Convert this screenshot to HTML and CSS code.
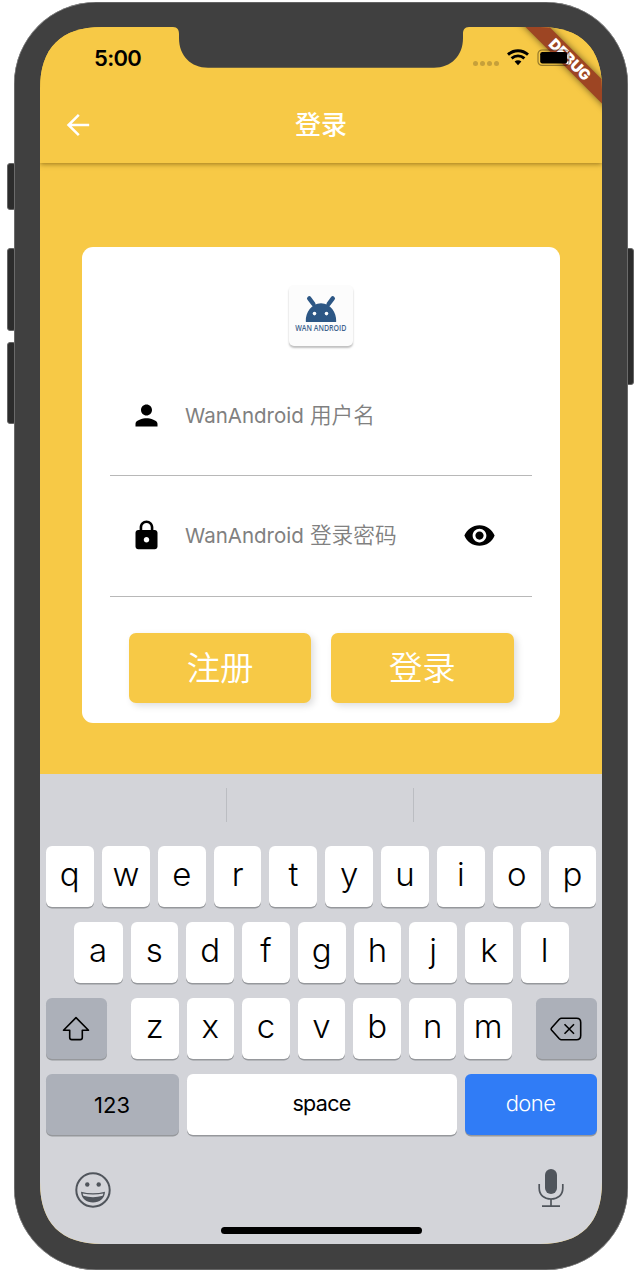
FILE: index.html
```
<!DOCTYPE html>
<html lang="zh-CN">
<head>
<meta charset="utf-8">
<title>登录</title>
<link rel="stylesheet" href="styles.css">
</head>
<body>
<main class="stage">
  <i class="side mute"></i><i class="side vol-up"></i><i class="side vol-down"></i><i class="side power"></i>
  <div class="device">
    <div class="screen">
      <div class="debug">DEBUG</div>
      <header class="appbar">
        <div class="status">
          <span class="time">5:00</span>
          <span class="signal"><i></i><i></i><i></i><i></i></span>
          <svg class="wifi" width="22" height="17" viewBox="0 0 22 17" fill="none" stroke="#000" stroke-width="2.9"><path d="M1 5.6C6.8.4 15.2.4 21 5.6"/><path d="M4.6 9.4C8.3 6 13.7 6 17.4 9.4"/><path d="M11 16.2L7.6 12.6C9.5 10.9 12.5 10.9 14.4 12.6Z" fill="#000" stroke="none"/></svg>
          <svg class="battery" width="36" height="18" viewBox="0 0 36 18"><rect x="1" y="1" width="31" height="15.4" rx="4" fill="none" stroke="#000" stroke-opacity=".4" stroke-width="1.2"/><rect x="3.2" y="3" width="27" height="11.4" rx="2.2"/></svg>
        </div>
        <div class="nav">
          <svg class="back" width="24" height="24" viewBox="0 0 24 24" fill="none" stroke="#fff" stroke-width="2.5"><path d="M23.2 12H2.5M12.8 1.8L2.5 12L12.8 22.2"/></svg>
          <h1>登录</h1>
        </div>
      </header>
      <section class="content">
        <div class="card">
          <div class="logo">
            <svg width="32" height="28" viewBox="0 0 32 28"><path d="M.8 26.4C.5 17.500 6.500 8.200 16 8.200S31.500 17.500 31.200 26.400Q31.200 27 30.200 27H1.800Q.8 27 .8 26.400Z" fill="#2d5785"/><path d="M4.200 3.400L8.400 9M27.800 3.400L23.600 9" stroke="#2d5785" stroke-width="4.400" stroke-linecap="round"/><circle cx="9.500" cy="18.600" r="1.800" fill="#fff"/><circle cx="21.500" cy="18.600" r="1.800" fill="#fff"/></svg>
            <span>WAN ANDROID</span>
          </div>
          <div class="field user">
            <svg class="lead" width="33" height="33" viewBox="0 0 24 24"><path d="M12 12c2.21 0 4-1.79 4-4s-1.79-4-4-4-4 1.79-4 4 1.79 4 4 4zm0 2c-2.67 0-8 1.34-8 4v2h16v-2c0-2.66-5.33-4-8-4z"/></svg>
            <span class="hint"><b>WanAndroid</b> 用户名</span>
          </div>
          <div class="field">
            <svg class="lead" width="33" height="33" viewBox="0 0 24 24"><path d="M18 8h-1V6c0-2.76-2.24-5-5-5S7 3.24 7 6v2H6c-1.1 0-2 .9-2 2v10c0 1.1.9 2 2 2h12c1.1 0 2-.9 2-2V10c0-1.1-.9-2-2-2zm-6 9c-1.1 0-2-.9-2-2s.9-2 2-2 2 .9 2 2-.9 2-2 2zm3.1-9H8.900V6c0-1.710 1.390-3.100 3.100-3.100s3.100 1.390 3.100 3.100v2z"/></svg>
            <span class="hint"><b>WanAndroid</b> 登录密码</span>
            <svg class="eye" width="33" height="33" viewBox="0 0 24 24"><path d="M12 4.500C7 4.500 2.730 7.610 1 12c1.730 4.390 6 7.500 11 7.500s9.270-3.110 11-7.500c-1.730-4.390-6-7.500-11-7.500zM12 17c-2.760 0-5-2.240-5-5s2.240-5 5-5 5 2.240 5 5-2.240 5-5 5zm0-8c-1.660 0-3 1.340-3 3s1.340 3 3 3 3-1.340 3-3-1.340-3-3-3z"/></svg>
          </div>
          <div class="actions"><button>注册</button><button>登录</button></div>
        </div>
      </section>
      <section class="keyboard">
        <div class="suggest"><i></i><i></i><i></i></div>
        <div class="row first"><kbd>q</kbd><kbd>w</kbd><kbd>e</kbd><kbd>r</kbd><kbd>t</kbd><kbd>y</kbd><kbd>u</kbd><kbd>i</kbd><kbd>o</kbd><kbd>p</kbd></div>
        <div class="row second"><kbd>a</kbd><kbd>s</kbd><kbd>d</kbd><kbd>f</kbd><kbd>g</kbd><kbd>h</kbd><kbd>j</kbd><kbd>k</kbd><kbd>l</kbd></div>
        <div class="row third">
          <kbd class="gray"><svg width="28" height="26" viewBox="0 0 28 26" fill="none" stroke="#000" stroke-width="1.6" stroke-linejoin="round"><path d="M14 1.600L26.500 14.200H20.300V21.500Q20.300 23.600 18.200 23.600H9.800Q7.700 23.600 7.700 21.500V14.200H1.500Z"/></svg></kbd>
          <div class="letters"><kbd>z</kbd><kbd>x</kbd><kbd>c</kbd><kbd>v</kbd><kbd>b</kbd><kbd>n</kbd><kbd>m</kbd></div>
          <kbd class="gray"><svg width="32" height="24" viewBox="0 0 32 24" fill="none" stroke="#000" stroke-width="1.6" stroke-linejoin="round"><path d="M11.500 1.300H26.500Q30.700 1.300 30.700 5.500V18.500Q30.700 22.700 26.500 22.700H11.500Q10.300 22.700 9.300 21.700L1.700 13.300Q.6 12 1.700 10.700L9.300 2.300Q10.300 1.300 11.500 1.300Z"/><path d="M14.500 7.300L24 16.700M24 7.300L14.500 16.700"/></svg></kbd>
        </div>
        <div class="row fourth"><kbd class="gray num">123</kbd><kbd class="space">space</kbd><kbd class="done">done</kbd></div>
        <div class="tools">
          <svg class="emoji" width="36" height="36" viewBox="0 0 36 36"><circle cx="18" cy="18" r="16.700" fill="none" stroke="#50555c" stroke-width="2"/><circle cx="12.300" cy="12.500" r="2.200" fill="#50555c"/><circle cx="23.700" cy="12.500" r="2.200" fill="#50555c"/><path d="M6 19.800Q18 22.800 30 19.800C29.600 26.800 24.500 30.600 18 30.600S6.400 26.800 6 19.800Z" fill="#50555c"/><path d="M7.700 21.400Q18 23.700 28.300 21.400Q28.200 22.600 27.600 23.800Q18 26.500 8.400 23.800Q7.800 22.600 7.700 21.400Z" fill="#d3d4d9"/></svg>
          <svg width="26" height="40" viewBox="0 0 26 40" fill="none" stroke="#50555c" stroke-width="1.7"><rect x="7" y="1" width="12" height="25" rx="6" fill="#50555c" stroke="none"/><path d="M1.200 16V20C1.200 27 6 31 13 31S24.800 27 24.800 20V16M13 31V38M4 38.200H22"/></svg>
        </div>
        <div class="home"></div>
      </section>
    </div>
    <svg class="notch" width="296" height="43" viewBox="0 0 296 43"><path d="M0 0V2C4.500 2.200 6 5 6 9V13C6 31 18 42.700 35 42.700H261C278 42.700 290 31 290 13V9C290 5 291.500 2.200 296 2V0Z" fill="#404040"/></svg>
  </div>
</main>
</body>
</html>
```
FILE: styles.css
```
* { box-sizing: border-box; }
body { margin: 0; background: #fff; font-family: Inter, "Noto Sans CJK SC", sans-serif; }
.stage { position: relative; width: 642px; height: 1272px; padding: 2px 14px; overflow: hidden; }
.device { position: relative; width: 614px; height: 1268px; padding: 25px 26px 26px; background: #404040; border-radius: 82px; box-shadow: inset 0 0 0 .6px #888; }
.screen { position: relative; width: 562px; height: 1217px; display: flex; flex-direction: column; background: #f7c946;
  clip-path: path("M0 62C0 21 21 0 62 0H500C541 0 562 21 562 62V1155C562 1196 541 1217 500 1217H62C21 1217 0 1196 0 1155Z"); }
.side { position: absolute; left: 7px; width: 9px; background: #2c2c2c; border: 1px solid #666; border-radius: 3px; }
.mute { top: 163px; height: 47px; }
.vol-up { top: 248px; height: 83px; }
.vol-down { top: 342px; height: 82px; }
.power { left: 625px; top: 248px; height: 137px; }
.notch { position: absolute; left: 159px; top: 23px; }

.appbar { flex: none; height: 136px; background: #f7c946; box-shadow: 0 1px 5px rgba(90,65,0,.6); }
.status { position: relative; z-index: 3; height: 61px; padding: 0 29px 0 54px; display: flex; align-items: center; }
.time { font-size: 22px; font-weight: 600; line-height: 26px; letter-spacing: -.7px; }
.signal { display: flex; gap: 2px; margin: 11px 8px 0 auto; }
.signal i { width: 5px; height: 5px; border-radius: 50%; background: #c6a03a; }
.wifi { margin-right: 8px; }
.nav { height: 73px; display: grid; grid-template-columns: 80px 1fr 80px; align-items: center; }
.back { margin-left: 26px; }
h1 { margin: 0; color: #fff; font-size: 26px; line-height: 41px; font-weight: 500; text-align: center; }
.debug { position: absolute; z-index: 2; left: 465px; top: 24px; width: 130px; height: 17px; transform: rotate(45deg); background: #9d4523; box-shadow: 0 0 7px rgba(0,0,0,.55); color: #fff; font-size: 15px; font-weight: 900; line-height: 17px; text-align: center; }

.content { height: 611px; padding: 84px 42px 0; }
.card { width: 478px; height: 476px; padding: 38px 28px 0; border-radius: 11px; background: #fff; }
.logo { width: 64px; height: 61px; margin: 0 auto; padding-top: 10px; display: flex; flex-direction: column; align-items: center; border-radius: 5px; background: #fcfcfc; box-shadow: 0 2px 2px rgba(0,0,0,.25); }
.logo svg { flex: none; }
.logo span { font: 600 9px/10px "Open Sans", sans-serif; color: #3e638d; white-space: nowrap; transform: scaleX(.78); }
.field { height: 121px; padding: 0 36px 1px 20px; display: flex; align-items: center; border-bottom: 1px solid #b8b8b8; }
.user { height: 130px; padding-top: 11px; }
.lead { flex: none; margin-right: 22px; }
.hint { color: #808080; font-size: 21.700px; font-weight: 350; line-height: 34px; white-space: nowrap; }
.hint b { display: inline-block; font-size: 20.500px; font-weight: 400; }
.eye { margin-left: auto; }
.actions { display: flex; gap: 20px; padding: 36.400px 18.500px 0 19px; }
button { flex: 1; height: 69.500px; border: 0; padding: 0; border-radius: 7px; background: #f7c946; color: #fff; font: 350 33.500px/71px Inter, "Noto Sans CJK SC", sans-serif; box-shadow: 3px 3px 7px rgba(0,0,0,.13); }

.keyboard { height: 470px; padding: 14px 5.500px 0; background: #d3d4d9; }
.suggest { height: 34px; margin: 0 -5.500px 24px; display: grid; grid-template-columns: 186px 187px 1fr; }
.suggest i + i { border-left: 1px solid #bbbdc2; }
.row { height: 61px; margin-bottom: 15px; display: flex; gap: 8px; }
.first kbd:first-child { flex: none; width: 48.500px; }
.second { padding: 0 28px; }
.second kbd:first-child { flex: none; width: 49px; }
kbd { flex: 1; display: flex; align-items: center; justify-content: center; padding-bottom: 6px; border-radius: 6px; background: #fff; box-shadow: 0 1.500px 0 #96989c; font: 350 33px/50px Inter, sans-serif; color: #000; }
.gray { background: #acb0b9; padding: 0; }
.third .gray { flex: none; width: 61px; }
.letters { flex: 1; display: flex; gap: 8px; margin: 0 15.500px 0 16.500px; }
.fourth kbd { flex: none; font-size: 22px; font-weight: 400; padding-bottom: 4px; }
.fourth .num { width: 133px; padding: 0; }
.fourth .space { width: 270px; font-size: 21.500px; letter-spacing: -.7px; }
.fourth .done { width: 132px; background: #307cf6; color: #fff; font-weight: 300; letter-spacing: -.6px; }
.tools { height: 60px; padding: 15px 33px 0 29.500px; display: flex; justify-content: space-between; align-items: center; }
.emoji { margin-top: 4px; }
.home { width: 201px; height: 7px; margin: 16.500px auto 0; border-radius: 4px; background: #000; }
```
